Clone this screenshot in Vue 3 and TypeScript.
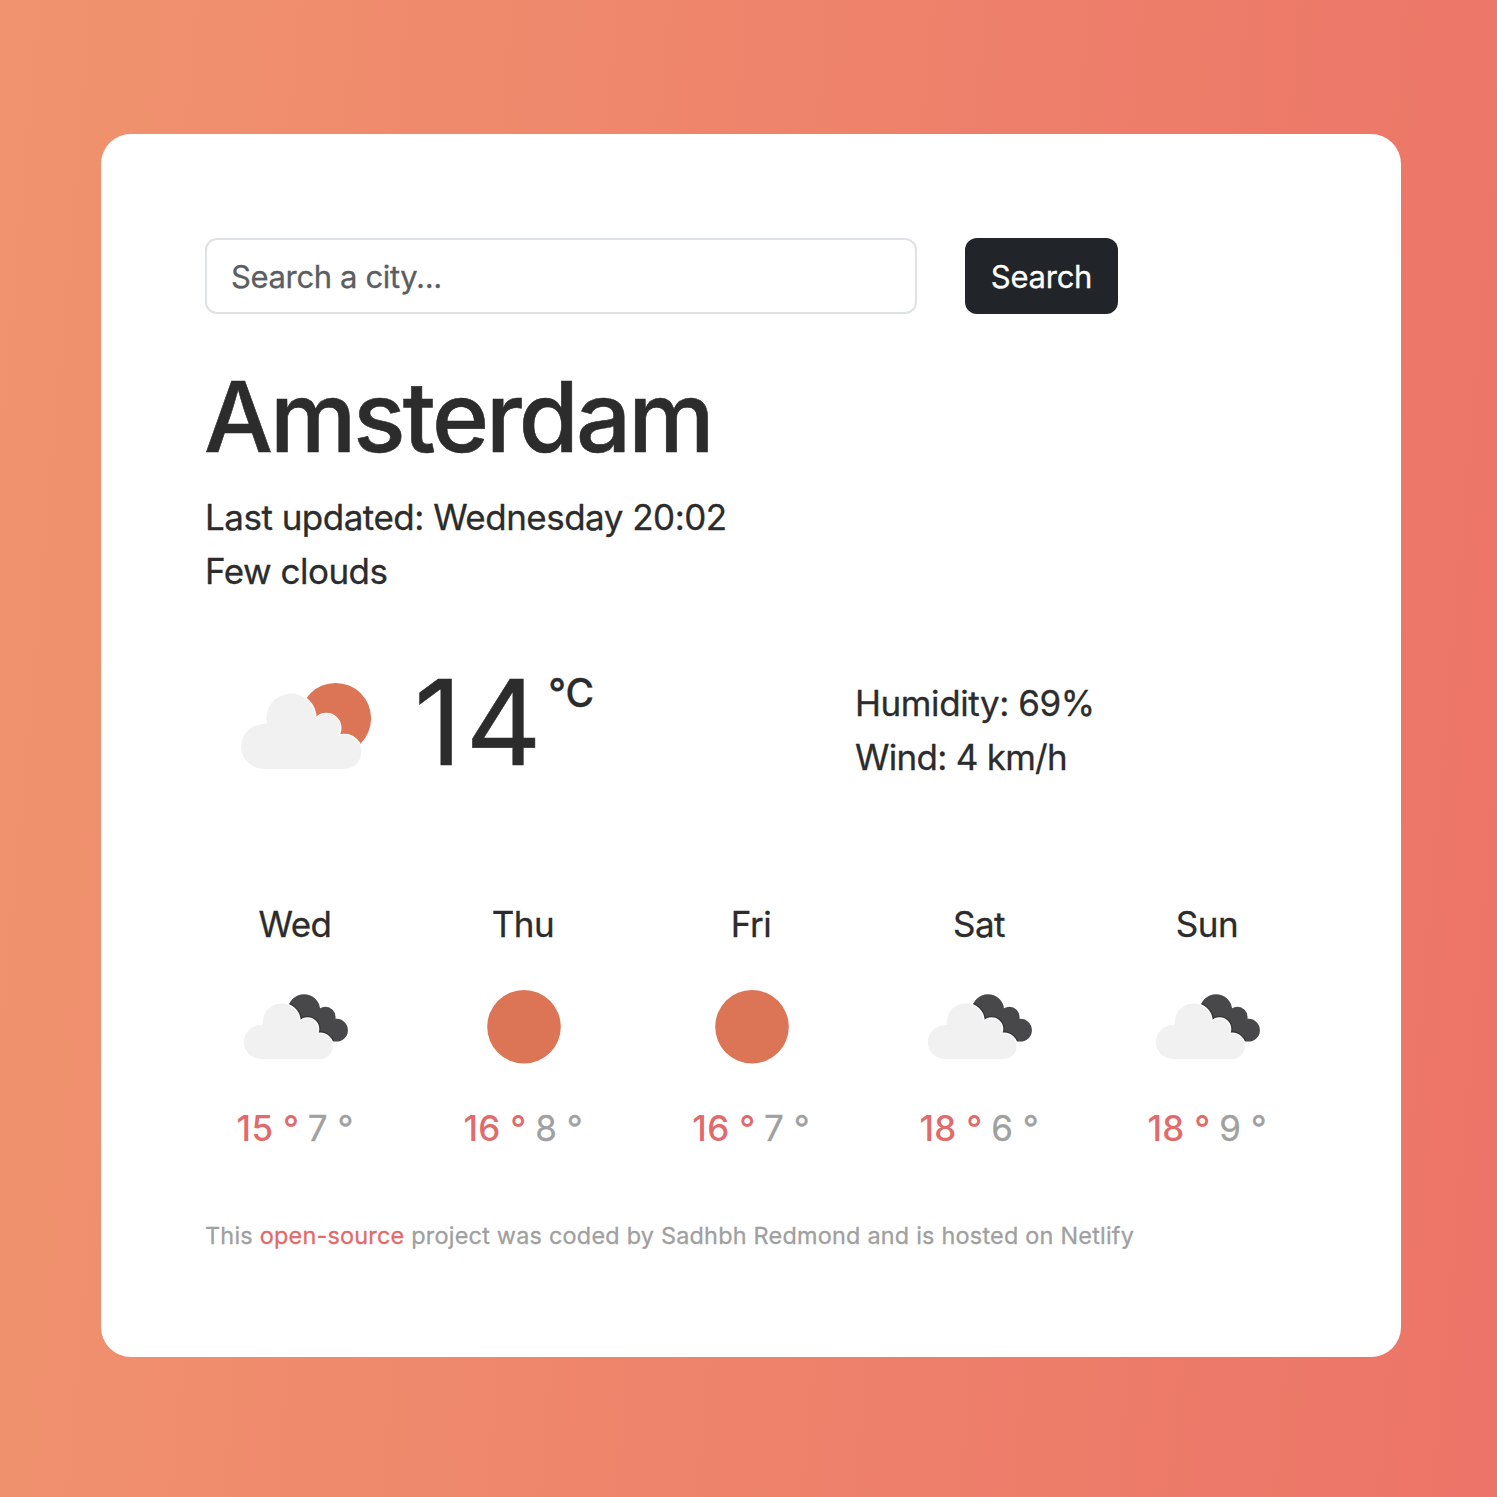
<script setup lang="ts">
type Sky = 'clouds' | 'sun'

interface Day {
  name: string
  sky: Sky
  high: number
  low: number
}

const days: Day[] = [
  { name: 'Wed', sky: 'clouds', high: 15, low: 7 },
  { name: 'Thu', sky: 'sun', high: 16, low: 8 },
  { name: 'Fri', sky: 'sun', high: 16, low: 7 },
  { name: 'Sat', sky: 'clouds', high: 18, low: 6 },
  { name: 'Sun', sky: 'clouds', high: 18, low: 9 },
]
</script>

<template>
  <div class="page">
    <main class="card">
      <form class="search" @submit.prevent>
        <input class="field" type="text" placeholder="Search a city..." />
        <button class="submit" type="submit">Search</button>
      </form>

      <h1 class="city">Amsterdam</h1>
      <ul class="lines">
        <li>Last updated: Wednesday 20:02</li>
        <li>Few clouds</li>
      </ul>

      <section class="current">
        <div class="now">
          <svg class="now-icon" viewBox="235 675 142 102" aria-hidden="true">
            <circle cx="335.6" cy="718.4" r="35.5" fill="#dc7555" />
            <g class="halo">
              <circle cx="263.5" cy="746.5" r="22.4" />
              <circle cx="291" cy="718.2" r="24.6" />
              <circle cx="326.3" cy="728" r="14.2" />
              <circle cx="344.3" cy="751.8" r="17.1" />
            </g>
            <g fill="#f1f1f1">
              <circle cx="263.5" cy="746.5" r="22.4" />
              <circle cx="291" cy="718.2" r="24.6" />
              <circle cx="326.3" cy="728" r="14.2" />
              <circle cx="344.3" cy="751.8" r="17.1" />
              <path d="M263.5 724L291 718L326 728L345 752V768.9H263.5Z" />
            </g>
          </svg>
          <strong class="temp">14</strong>
          <span class="unit">°C</span>
        </div>
        <ul class="lines details">
          <li class="humidity">Humidity: 69%</li>
          <li class="wind">Wind: 4 km/h</li>
        </ul>
      </section>

      <section class="forecast">
        <article v-for="day in days" :key="day.name" class="day">
          <div class="day-name">{{ day.name }}</div>
          <svg v-if="day.sky === 'sun'" class="day-icon" viewBox="235 967 120 120" aria-hidden="true">
            <circle cx="296" cy="1026.8" r="36.8" fill="#dc7555" />
          </svg>
          <svg v-else class="day-icon" viewBox="235 967 120 120" aria-hidden="true">
            <clipPath :id="`back-${day.name}`">
              <circle cx="304" cy="1010.4" r="16.2" />
              <circle cx="325.4" cy="1017" r="10.2" />
              <circle cx="336.5" cy="1030.2" r="11.4" />
              <path d="M303 1010L318 1008L326 1015L336 1030L332 1041L304 1030Z" />
            </clipPath>
            <g :clip-path="`url(#back-${day.name})`">
              <rect x="280" y="990" width="70" height="55" fill="#48484a" />
              <g class="shade">
                <circle cx="281.3" cy="1021.9" r="18.5" />
                <circle cx="307.6" cy="1029" r="10.7" />
                <circle cx="320" cy="1046.2" r="12.7" />
              </g>
            </g>
            <g class="halo">
              <circle cx="281.3" cy="1021.9" r="18.5" />
              <circle cx="307.6" cy="1029" r="10.7" />
              <circle cx="320" cy="1046.2" r="12.7" />
            </g>
            <g fill="#f1f1f1">
              <circle cx="260.6" cy="1042.1" r="16.8" />
              <circle cx="281.3" cy="1021.9" r="18.5" />
              <circle cx="307.6" cy="1029" r="10.7" />
              <circle cx="320" cy="1046.2" r="12.7" />
              <path d="M260.6 1025.3L281 1021L308 1029L320 1046V1058.9H260.6Z" />
            </g>
          </svg>
          <div class="range">
            <span class="high">{{ day.high }} °</span> <span class="low">{{ day.low }} °</span>
          </div>
        </article>
      </section>

      <footer class="credit">
        This <a href="#" class="link">open-source</a> project was coded by Sadhbh Redmond and is hosted on Netlify
      </footer>
    </main>
  </div>
</template>

<style>
body {
  margin: 0;
}
</style>

<style scoped>
.page {
  box-sizing: border-box;
  width: 1497px;
  height: 1497px;
  padding: 134px 96px 0 101px;
  background: linear-gradient(95deg, #f0936e 0%, #ec7468 100%);
  color: #2c2c2c;
  font-family: Inter, "Liberation Sans", sans-serif;
  overflow: hidden;
}

.card {
  box-sizing: border-box;
  height: 1223px;
  padding: 104px;
  border-radius: 30px;
  background: #fff;
}

.search {
  display: flex;
  gap: 48px;
  height: 76px;
}

.field,
.submit {
  box-sizing: border-box;
  height: 76px;
  border-radius: 12px;
  font-family: inherit;
  font-size: 31px;
}

.field {
  width: 712px;
  padding: 0 24px;
  border: 2px solid #dee2e6;
  background: #fff;
  letter-spacing: -0.36px;
  -webkit-text-stroke: 0.3px;
}

.field::placeholder {
  color: #5b5e61;
  opacity: 1;
}

.submit {
  width: 153px;
  padding: 0;
  border: 0;
  background: #212529;
  color: #fff;
  letter-spacing: -0.25px;
  -webkit-text-stroke: 0.3px;
}

.city {
  margin: 43px 0 14px -1px;
  font-size: 97.2px;
  font-weight: 500;
  line-height: 119px;
  letter-spacing: -2.95px;
  -webkit-text-stroke: 0.6px;
}

.lines {
  margin: 0;
  padding: 0;
  list-style: none;
  font-size: 35px;
  line-height: 54px;
  letter-spacing: -0.51px;
  -webkit-text-stroke: 0.3px;
}

.current {
  display: flex;
  height: 232px;
  margin-top: 60px;
}

.now {
  display: flex;
  align-items: flex-start;
  width: 650px;
}

.now-icon {
  width: 142px;
  height: 102px;
  margin: 17px 0 0 30px;
}

.temp {
  margin: 4px 0 0 37px;
  font-size: 118px;
  font-weight: 400;
  line-height: 120px;
  letter-spacing: 3.5px;
  -webkit-text-stroke: 0.5px;
}

.unit {
  margin: 10px 0 0 3px;
  font-size: 39px;
  font-weight: 500;
  line-height: 50px;
  -webkit-text-stroke: 0.3px;
}

.details {
  margin-top: 18px;
}

.humidity {
  letter-spacing: -0.42px;
}

.wind {
  letter-spacing: -0.72px;
}

.halo {
  fill: #fff;
  stroke: #fff;
  stroke-width: 2px;
}

.shade {
  fill: none;
  stroke: #343436;
  stroke-width: 4.5px;
}

.forecast {
  display: flex;
  margin: 7px -24px 0;
}

.day {
  display: flex;
  flex-direction: column;
  align-items: center;
  width: 228px;
  font-size: 35px;
  line-height: 54px;
}

.day-name {
  letter-spacing: -0.5px;
  -webkit-text-stroke: 0.3px;
}

.day-icon {
  width: 120px;
  height: 120px;
  margin: 16px 0 14px;
}

.high {
  margin-right: -1.4px;
  color: #e16b6b;
  font-weight: 500;
  letter-spacing: 0.35px;
}

.low {
  color: #a0a0a0;
  -webkit-text-stroke: 0.3px;
}

.credit {
  margin-top: 63px;
  color: #a0a0a0;
  font-size: 23.4px;
  line-height: 36px;
  letter-spacing: 0.235px;
  -webkit-text-stroke: 0.3px;
}

.link {
  color: #e16b6b;
  text-decoration: none;
}
</style>
